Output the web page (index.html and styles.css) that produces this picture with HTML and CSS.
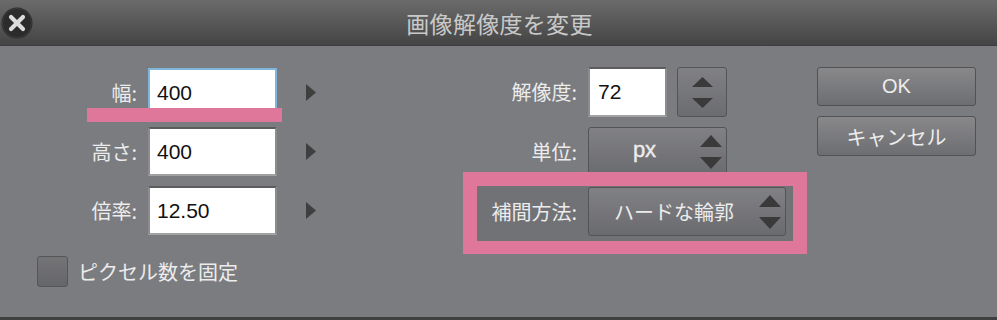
FILE: index.html
```html
<!DOCTYPE html>
<html lang="ja">
<head>
<meta charset="utf-8">
<title>画像解像度を変更</title>
<link rel="stylesheet" href="styles.css">
</head>
<body>
<div class="dialog">
  <div class="titlebar">
    <div class="tb-left">
      <svg class="close" width="32" height="32" viewBox="0 0 32 32">
        <circle cx="16" cy="16" r="15.5" fill="#2b2b2b"/>
        <circle cx="16" cy="16" r="14.5" fill="none" stroke="#3c3c3c" stroke-width="1"/>
        <path d="M10 10 L22 22 M22 10 L10 22" stroke="#dcdcdc" stroke-width="4.2" stroke-linecap="round"/>
      </svg>
    </div>
    <div class="title">画像解像度を変更</div>
    <div class="tb-right"></div>
  </div>
  <div class="content">
    <div class="col-left">
      <div class="row">
        <span class="label lw">幅:</span>
        <div class="field focused">400</div>
        <svg class="play" width="10" height="17" viewBox="0 0 10 17"><polygon points="0,0 10,8.5 0,17" fill="#3f3f3f"/></svg>
        <div class="mark-bar"></div>
      </div>
      <div class="row">
        <span class="label lw">高さ:</span>
        <div class="field">400</div>
        <svg class="play" width="10" height="17" viewBox="0 0 10 17"><polygon points="0,0 10,8.5 0,17" fill="#3f3f3f"/></svg>
      </div>
      <div class="row">
        <span class="label lw">倍率:</span>
        <div class="field">12.50</div>
        <svg class="play" width="10" height="17" viewBox="0 0 10 17"><polygon points="0,0 10,8.5 0,17" fill="#3f3f3f"/></svg>
      </div>
      <div class="check-row">
        <span class="checkbox"></span>
        <span class="label">ピクセル数を固定</span>
      </div>
    </div>

    <div class="col-mid">
      <div class="mrow r1">
        <span class="label mlw">解像度:</span>
        <div class="field small">72</div>
        <div class="spin">
          <svg width="21" height="31" viewBox="0 0 21 31"><polygon points="10.5,0 21,10 0,10" fill="#3a3a3a"/><polygon points="0,21 21,21 10.5,31" fill="#3a3a3a"/></svg>
        </div>
      </div>
      <div class="mrow r2">
        <span class="label mlw">単位:</span>
        <div class="select unit">
          <span class="sel-text">px</span>
          <svg class="sel-arrows" width="22" height="34" viewBox="0 0 22 34"><polygon points="11,0 22,12 0,12" fill="#3a3a3a"/><polygon points="0,22 22,22 11,34" fill="#3a3a3a"/></svg>
        </div>
      </div>
      <div class="highlight">
        <div class="hl-inner">
          <span class="label hlw">補間方法:</span>
          <div class="select interp">
            <span class="sel-text">ハードな輪郭</span>
            <svg class="sel-arrows" width="22" height="34" viewBox="0 0 22 34"><polygon points="11,0 22,12 0,12" fill="#3a3a3a"/><polygon points="0,22 22,22 11,34" fill="#3a3a3a"/></svg>
          </div>
        </div>
      </div>
    </div>

    <div class="col-right">
      <div class="btn ok">OK</div>
      <div class="btn">キャンセル</div>
    </div>
  </div>
  <div class="bottom-strip"></div>
</div>
</body>
</html>
```

FILE: styles.css
```css
html, body {
  margin: 0;
  padding: 0;
}
body {
  width: 997px;
  height: 320px;
  overflow: hidden;
  background: #7b7c80;
  font-family: "Noto Sans CJK JP", "Noto Sans", sans-serif;
}
.dialog {
  width: 997px;
  height: 320px;
  display: flex;
  flex-direction: column;
  background: #7b7c80;
}
.titlebar {
  height: 46px;
  flex: none;
  display: grid;
  grid-template-columns: 1fr auto 1fr;
  align-items: center;
  background: linear-gradient(#6b6b6b, #4a4a4a 85%, #444444);
  border-bottom: 1px solid #3e3e3e;
  box-sizing: border-box;
}
.tb-left {
  display: flex;
  align-items: center;
  padding-left: 1px;
}
.close {
  display: block;
}
.title {
  color: #c9c9c9;
  font-size: 23px;
  line-height: 30px;
  letter-spacing: 0.3px;
  padding-left: 2px;
}
.content {
  flex: 1;
  display: flex;
  padding: 22px 0 0 37px;
}
.label {
  color: #ececec;
  font-size: 20px;
  line-height: 28px;
}
.col-left {
  width: 279px;
  display: flex;
  flex-direction: column;
  gap: 10px;
}
.row {
  position: relative;
  display: flex;
  align-items: center;
  height: 49px;
}
.lw {
  width: 100px;
  text-align: right;
  margin-right: 11px;
}
.field {
  box-sizing: border-box;
  height: 49px;
  width: 129px;
  background: #ffffff;
  border: 2px solid;
  border-color: #5c5c5c #8c8c8c #a2a2a2 #8c8c8c;
  font-family: "Liberation Sans", Arial, sans-serif;
  font-size: 21px;
  color: #111;
  display: flex;
  align-items: center;
  padding-left: 7px;
}
.field.focused {
  border-color: #7fb6dc;
}
.play {
  display: block;
  margin-left: 29px;
}
.mark-bar {
  position: absolute;
  left: 50px;
  top: 40px;
  width: 195px;
  height: 14px;
  background: #de7799;
}
.check-row {
  display: flex;
  align-items: center;
  margin-top: 11px;
  gap: 10px;
}
.checkbox {
  box-sizing: border-box;
  width: 31px;
  height: 31px;
  border: 1px solid #555658;
  border-radius: 3px;
  background: linear-gradient(#747477, #65666a);
}

.col-mid {
  margin-left: 147px;
  width: 344px;
  display: flex;
  flex-direction: column;
  box-sizing: border-box;
}
.mrow {
  display: flex;
  align-items: center;
}
.mrow.r1 {
  height: 50px;
  margin-top: -1px;
}
.mrow.r2 {
  height: 49px;
  margin-top: 10px;
}
.mlw {
  width: 114px;
  text-align: right;
  margin-right: 11px;
}
.field.small {
  width: 79px;
  height: 50px;
  padding-left: 8px;
}
.spin {
  box-sizing: border-box;
  width: 50px;
  height: 50px;
  margin-left: 10px;
  border: 1px solid #545454;
  border-radius: 3px;
  background: linear-gradient(#818185, #6b6c6f);
  display: flex;
  align-items: center;
  justify-content: center;
}
.spin svg {
  display: block;
}
.select {
  box-sizing: border-box;
  height: 49px;
  border: 1px solid #545454;
  border-radius: 3px;
  background: linear-gradient(#818185, #6a6b6e);
  display: flex;
  align-items: center;
}
.select.unit {
  width: 139px;
}
.select.interp {
  width: 198px;
}
.sel-text {
  flex: 1;
  text-align: center;
  color: #ececec;
  font-size: 20px;
  line-height: 28px;
}
.select.unit .sel-text {
  font-family: "Liberation Sans", Arial, sans-serif;
  font-size: 22px;
  color: #ececec;
  padding-bottom: 3px;
  -webkit-text-stroke: 0.4px #ececec;
}
.sel-arrows {
  display: block;
  margin-right: 4px;
  flex: none;
}
.highlight {
  margin-top: -4px;
  border: 14px solid #de7799;
  border-bottom-width: 13px;
  width: 344px;
  box-sizing: border-box;
}
.hl-inner {
  background: #717276;
  display: flex;
  align-items: flex-start;
  padding: 1px 7px 5px 0;
}
.hlw {
  width: 100px;
  text-align: right;
  margin-right: 11px;
  line-height: 49px;
}

.col-right {
  margin-left: 10px;
  width: 159px;
  display: flex;
  flex-direction: column;
  gap: 10px;
  margin-top: -1px;
}
.btn {
  box-sizing: border-box;
  height: 40px;
  border: 1px solid #525252;
  border-radius: 3px;
  background: linear-gradient(#88888b, #6d6e71);
  color: #ededed;
  font-size: 20px;
  display: flex;
  align-items: center;
  justify-content: center;
}
.btn.ok {
  height: 39px;
  font-family: "Liberation Sans", Arial, sans-serif;
  font-size: 20px;
}
.bottom-strip {
  height: 3px;
  flex: none;
  background: #404040;
}
```
